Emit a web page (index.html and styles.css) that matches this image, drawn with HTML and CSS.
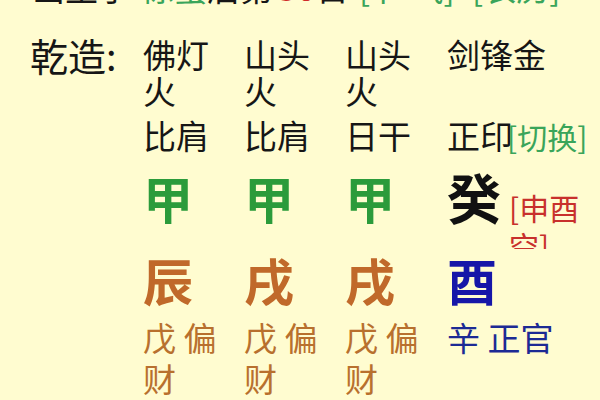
FILE: index.html
```html
<!DOCTYPE html>
<html lang="zh">
<head>
<meta charset="utf-8">
<title>乾造</title>
<link rel="stylesheet" href="styles.css">
</head>
<body>
<div class="page">
  <div class="topline"><span class="ink">出生于</span><span class="grn">惊蛰</span><span class="ink">后第</span><span class="red">30</span><span class="ink">日</span><span class="grn">[节 气]</span> <span class="grn">[农历]</span></div>
  <div class="chart">
    <div class="label">乾造:</div>
    <div class="cell nayin">佛灯火</div>
    <div class="cell nayin">山头火</div>
    <div class="cell nayin">山头火</div>
    <div class="cell nayin last">剑锋金</div>

    <div class="label"></div>
    <div class="cell ss">比肩</div>
    <div class="cell ss">比肩</div>
    <div class="cell ss">日干</div>
    <div class="cell ss last">正印<span class="switch">[切换]</span></div>

    <div class="label"></div>
    <div class="cell big green">甲</div>
    <div class="cell big green">甲</div>
    <div class="cell big green">甲</div>
    <div class="cell last stemrow"><span class="big black">癸</span><span class="kong">[申酉空]</span></div>

    <div class="label"></div>
    <div class="cell big brown">辰</div>
    <div class="cell big brown">戌</div>
    <div class="cell big brown">戌</div>
    <div class="cell big blue last">酉</div>

    <div class="label"></div>
    <div class="cell hid brown-s">戊 偏财</div>
    <div class="cell hid brown-s">戊 偏财</div>
    <div class="cell hid brown-s">戊 偏财</div>
    <div class="cell hid blue-s last">辛 正官</div>
  </div>
</div>
</body>
</html>
```
FILE: styles.css
```css
html, body {
  margin: 0;
  padding: 0;
}
body {
  background: #fffcd0;
  width: 600px;
  height: 400px;
  overflow: hidden;
  font-family: "Noto Sans CJK SC", "Noto Sans", sans-serif;
  color: #141414;
}
.page {
  padding-left: 30px;
}
.topline {
  margin-top: -33px;
  font-size: 33px;
  line-height: 40px;
  height: 40px;
  white-space: nowrap;
  padding-left: 2px;
}
.topline .ink { color: #161616; }
.topline .grn { color: #3aa55a; margin-left: 10px; }
.topline .red { color: #d02a2a; font-weight: bold; margin-left: 4px; }
.chart {
  margin-top: 29px;
  display: grid;
  grid-template-columns: 113px 101px 101px 102px 1fr;
  grid-template-rows: 81px 52px 82px 66px 82px;
  align-items: start;
}
.label {
  font-size: 38px;
  line-height: 40px;
  margin-top: -1px;
  color: #161616;
}
.cell {
  font-size: 33px;
  line-height: 36px;
  max-width: 80px;
}
.cell.last {
  max-width: none;
}
.nayin, .ss {
  color: #161616;
}
.switch {
  color: #3aa55a;
  font-size: 30px;
  margin-left: -6px;
}
.big {
  font-size: 50px;
  line-height: 56px;
  font-weight: bold;
}
.green { color: #2b9b3b; }
.black { color: #111; }
.brown { color: #c0692a; }
.blue { color: #1616a8; }
.stemrow {
  display: flex;
  align-items: flex-start;
}
.stemrow .big {
  font-size: 54px;
}
.kong {
  color: #c8302c;
  font-size: 30px;
  line-height: 38px;
  width: 80px;
  height: 61px;
  overflow: hidden;
  margin-top: 19px;
  margin-left: 8px;
}
.hid {
  font-size: 33px;
  line-height: 41px;
}
.brown-s { color: #b8702e; }
.blue-s { color: #1c2a94; }
```
